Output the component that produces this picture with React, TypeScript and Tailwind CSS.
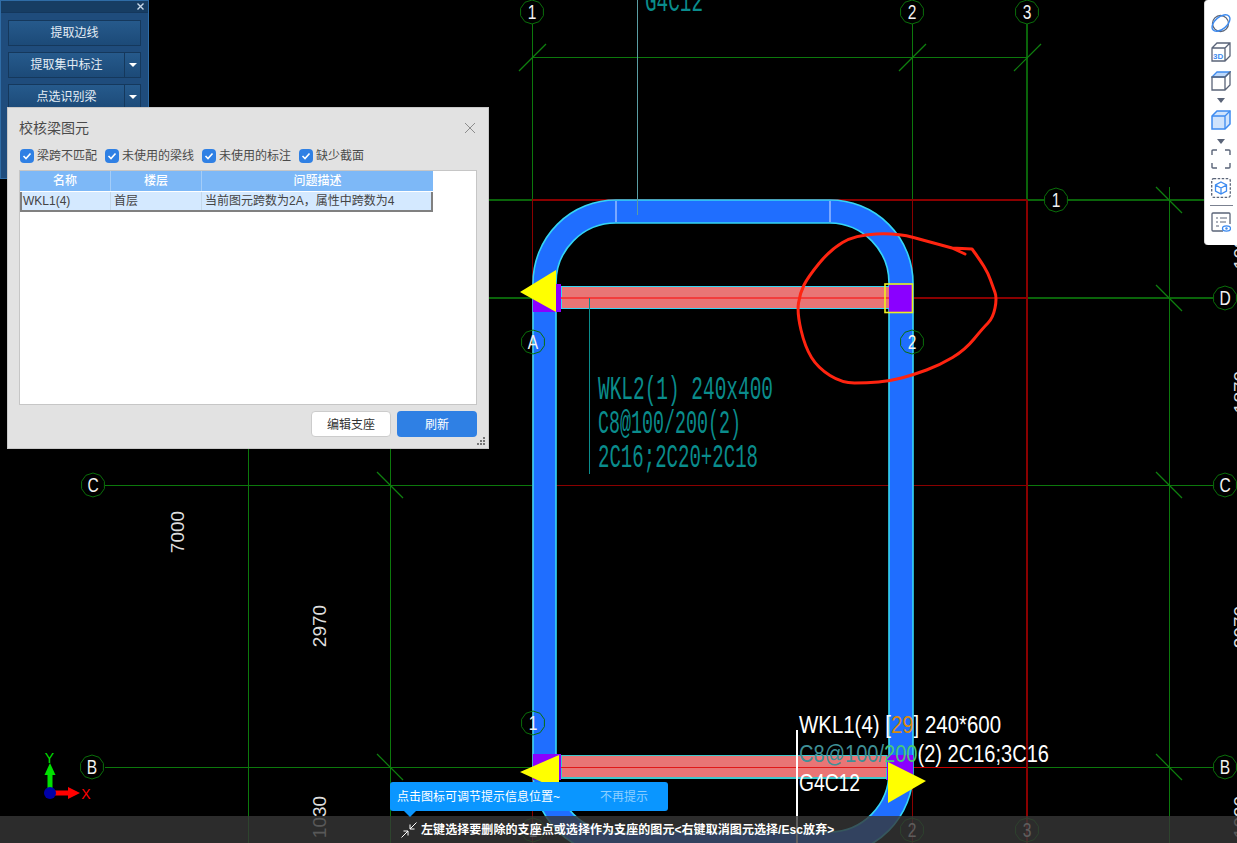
const GREEN = '#0c780c';
const DARK_RED = '#8a0000';
const TEAL = '#0a8c8c';
const BEAM = '#1f6eff';
const CYAN = '#35d6f5';

const SCRIBBLE = [
  [965, 254], [952, 248], [972, 249], [980, 260], [988, 273], [993, 287], [997, 298], [993, 318], [983, 328],
  [965, 350], [940, 365], [913, 375], [890, 381], [867, 383], [842, 383], [818, 368], [805, 347], [797, 313],
  [800, 293], [808, 277], [830, 250], [855, 235], [897, 233], [930, 242], [952, 248],
];

function smoothPath(pts: number[][]) {
  let d = `M${pts[0][0]} ${pts[0][1]} L${pts[1][0]} ${pts[1][1]} L${pts[2][0]} ${pts[2][1]}`;
  for (let i = 3; i < pts.length; i++) {
    const mx = (pts[i - 1][0] + pts[i][0]) / 2;
    const my = (pts[i - 1][1] + pts[i][1]) / 2;
    d += ` Q${pts[i - 1][0]} ${pts[i - 1][1]} ${mx} ${my}`;
  }
  const last = pts[pts.length - 1];
  return `${d} L${last[0]} ${last[1]}`;
}

function gon(cx: number, cy: number, r: number) {
  const pts: string[] = [];
  for (let i = 0; i < 10; i++) {
    const a = (Math.PI * 2 * i) / 10 + Math.PI / 10;
    pts.push(`${(cx + r * Math.cos(a)).toFixed(1)},${(cy + r * Math.sin(a)).toFixed(1)}`);
  }
  return pts.join(' ');
}

function Axis({ x, y, label, fill = 'black' }: { x: number; y: number; label: string; fill?: string }) {
  return (
    <g>
      <polygon points={gon(x, y, 12)} fill={fill} stroke="#0a6e0a" strokeWidth="1" />
      <text transform={`translate(${x},${y + 7}) scale(0.82,1.03)`} fontSize="19" fill="#f2f2f2" textAnchor="middle">{label}</text>
    </g>
  );
}

function Line({ x1, y1, x2, y2, c = GREEN, w = 1 }: { x1: number; y1: number; x2: number; y2: number; c?: string; w?: number }) {
  return <line x1={x1} y1={y1} x2={x2} y2={y2} stroke={c} strokeWidth={w} shapeRendering="crispEdges" />;
}

function Tick({ x1, y1, x2, y2 }: { x1: number; y1: number; x2: number; y2: number }) {
  return <line x1={x1} y1={y1} x2={x2} y2={y2} stroke="#0f800f" strokeWidth="1.2" />;
}

function Dim({ x, y, t }: { x: number; y: number; t: string }) {
  return (
    <text transform={`translate(${x},${y}) rotate(-90)`} fontSize="19" fill="#dddddd" textAnchor="middle">{t}</text>
  );
}

function CadDrawing() {
  const backTicks = [[390, 485], [390, 767], [1169, 200], [1169, 298], [1169, 485], [1169, 767]];
  const slashTicks = [532, 912, 1027];
  return (
    <svg className="absolute inset-0" width="1237" height="843" viewBox="0 0 1237 843">
      {/* axis grid */}
      <Line x1={248} y1={440} x2={248} y2={843} />
      <Line x1={390} y1={440} x2={390} y2={843} />
      <Line x1={1169} y1={187} x2={1169} y2={843} />
      <Line x1={532} y1={24} x2={532} y2={200} />
      <Line x1={912} y1={24} x2={912} y2={200} />
      <Line x1={1027} y1={24} x2={1027} y2={200} w={2} c="#0a640a" />
      <Line x1={532} y1={57} x2={1027} y2={57} />
      <Line x1={489} y1={200} x2={532} y2={200} w={2} c="#0a640a" />
      <Line x1={489} y1={298} x2={532} y2={298} w={2} c="#0a640a" />
      <Line x1={105} y1={485} x2={532} y2={485} />
      <Line x1={105} y1={767} x2={532} y2={767} />
      <Line x1={1027} y1={200} x2={1204} y2={200} w={2} c="#0a640a" />
      <Line x1={1027} y1={298} x2={1213} y2={298} w={2} c="#0a640a" />
      <Line x1={1027} y1={485} x2={1213} y2={485} />
      <Line x1={1027} y1={767} x2={1213} y2={767} />
      <Line x1={532} y1={200} x2={1027} y2={200} c={DARK_RED} w={2} />
      <Line x1={532} y1={298} x2={1027} y2={298} c={DARK_RED} w={2} />
      <Line x1={532} y1={485} x2={1027} y2={485} c={DARK_RED} />
      <Line x1={532} y1={767} x2={1027} y2={767} c="#c80000" />
      <Line x1={532} y1={200} x2={532} y2={843} c={DARK_RED} />
      <Line x1={912} y1={200} x2={912} y2={843} c={DARK_RED} />
      <Line x1={1027} y1={200} x2={1027} y2={843} c={DARK_RED} w={2} />
      {backTicks.map(([x, y]) => (
        <Tick key={`${x}-${y}`} x1={x - 13} y1={y - 13} x2={x + 13} y2={y + 13} />
      ))}
      {slashTicks.map((x) => (
        <Tick key={x} x1={x + 14} y1={44} x2={x - 13} y2={71} />
      ))}

      {/* ring beam */}
      <path
        d="M533 283 A83 83 0 0 1 616 200 H830 A83 83 0 0 1 913 283 V772 A83 83 0 0 1 830 855 H616 A83 83 0 0 1 533 772 Z M556 283 V772 A60 60 0 0 0 616 832 H830 A60 60 0 0 0 889 772 V283 A60 60 0 0 0 830 223 H616 A60 60 0 0 0 556 283 Z"
        fill={BEAM}
        fillRule="evenodd"
        stroke={CYAN}
        strokeWidth="1.6"
      />
      <Line x1={616} y1={201} x2={616} y2={222} c="#7aa8ff" w={2} />
      <Line x1={830} y1={201} x2={830} y2={222} c="#7aa8ff" w={2} />

      {/* upper cross beam */}
      <rect x={533} y={286} width={23} height={26} fill="#8a00ff" />
      <rect x={556} y={284} width={5} height={28} fill="#8a00ff" />
      <rect x={561.5} y={286.5} width={328} height={22} fill="#e97575" stroke={CYAN} strokeWidth="1" shapeRendering="crispEdges" />
      <Line x1={561} y1={298} x2={890} y2={298} c="#f23c3c" w={2} />
      <rect x={889} y={285} width={23} height={27} fill="#8a00ff" />
      <rect x={885} y={284} width={27.5} height={28.5} fill="none" stroke="#eeee20" strokeWidth="1.6" />
      <polygon points="520,292 556,270 556,312" fill="#ffff00" />

      {/* lower cross beam */}
      <rect x={533} y={754} width={23} height={26} fill="#8a00ff" />
      <rect x={556} y={754} width={5} height={26} fill="#8a00ff" />
      <rect x={886} y={755} width={27} height={25} fill="#8a00ff" />
      <rect x={561.5} y={755.5} width={325} height={22.5} fill="#e97575" stroke="#3cc8cc" strokeWidth="1.5" shapeRendering="crispEdges" />
      <Line x1={561} y1={767} x2={887} y2={767} c="#e01818" />
      <polygon points="520,772 559,755 559,790" fill="#ffff00" />
      <polygon points="888,762 926,781 888,803" fill="#ffff00" />

      {/* WKL2 leader and top note */}
      <Line x1={637} y1={0} x2={637} y2={215} c="#5a9da3" />
      <Line x1={589} y1={298} x2={589} y2={474} c={TEAL} />
      <g fill={TEAL} style={{ fontFamily: "'Liberation Mono', monospace" }}>
        <text x={645} y={11} fontSize="32" textLength="58" lengthAdjust="spacingAndGlyphs">G4C12</text>
        <text x={598} y={399} fontSize="34" textLength="175" lengthAdjust="spacingAndGlyphs">WKL2(1) 240x400</text>
        <text x={598} y={433} fontSize="34" textLength="143" lengthAdjust="spacingAndGlyphs">C8@100/200(2)</text>
        <text x={598} y={467} fontSize="34" textLength="160" lengthAdjust="spacingAndGlyphs">2C16;2C20+2C18</text>
      </g>

      {/* hand drawn circle */}
      <path d={smoothPath(SCRIBBLE)} fill="none" stroke="#ff2410" strokeWidth="3" strokeLinejoin="round" strokeLinecap="round" />

      {/* axis bubbles */}
      <Axis x={532} y={12} label="1" />
      <Axis x={912} y={12} label="2" />
      <Axis x={1027} y={12} label="3" />
      <Axis x={1056} y={200} label="1" />
      <Axis x={533} y={342} label="A" fill="none" />
      <Axis x={912} y={342} label="2" fill="none" />
      <Axis x={533} y={723} label="1" fill="none" />
      <Axis x={93} y={485} label="C" />
      <Axis x={92} y={767} label="B" />
      <Axis x={1225} y={298} label="D" />
      <Axis x={1225} y={485} label="C" />
      <Axis x={1225} y={767} label="B" />
      <Axis x={533} y={830} label="1" fill="none" />
      <Axis x={912} y={830} label="2" fill="none" />
      <Axis x={1027} y={830} label="3" fill="none" />

      {/* dimensions */}
      <Dim x={184} y={532} t="7000" />
      <Dim x={326} y={626} t="2970" />
      <Dim x={326} y={817} t="1030" />
      <Dim x={1247} y={248} t="1030" />
      <Dim x={1247} y={392} t="1870" />
      <Dim x={1247} y={627} t="2970" />
      <Dim x={1247} y={817} t="1030" />

      {/* beam label */}
      <Line x1={797} y1={730} x2={797} y2={843} c="#ffffff" w={2} />
      <g fontSize="23" fill="#ffffff">
        <text x={799} y={733} textLength="202" lengthAdjust="spacingAndGlyphs">
          WKL1(4) [<tspan fill="#d98a12">29</tspan>] 240*600
        </text>
        <text x={799} y={762} textLength="250" lengthAdjust="spacingAndGlyphs">
          <tspan fill="#3f9097">C8@100/</tspan><tspan fill="#48c878">200</tspan>(2) 2C16;3C16
        </text>
        <text x={799} y={791} textLength="61" lengthAdjust="spacingAndGlyphs">G4C12</text>
      </g>

      {/* UCS icon */}
      <rect x={47.5} y={772} width={5} height={20} fill="#00e000" />
      <polygon points="50,763 55.5,775 44.5,775" fill="#00e000" />
      <rect x={55} y={790.5} width={14} height={5} fill="#ff0000" />
      <polygon points="68,787 80,793 68,799" fill="#ff0000" />
      <circle cx={50} cy={793} r={6} fill="#0000a8" />
      <text x={49.5} y={763} fontSize="14" fill="#00e000" textAnchor="middle">Y</text>
      <text x={86} y={799} fontSize="14" fill="#ff0000" textAnchor="middle">X</text>
    </svg>
  );
}

function PanelButton({ label, split }: { label: string; split?: boolean }) {
  return (
    <div className="flex h-[26px] border border-[#15385c] bg-gradient-to-b from-[#265a8c] to-[#1c4a78] text-xs text-[#e4edf5]">
      <div className="flex flex-1 items-center justify-center">{label}</div>
      {split && (
        <div className="flex w-4 items-center justify-center border-l border-[#15385c]">
          <div className="h-0 w-0 border-x-[4px] border-t-[4px] border-x-transparent border-t-white" />
        </div>
      )}
    </div>
  );
}

function LeftPanel() {
  return (
    <div className="absolute left-0 top-0 flex h-[179px] w-[149px] flex-col border border-[#2f6ca6] bg-[#1f4c7c]">
      <div className="flex h-3 items-center justify-end border-b border-[#14375c] bg-[#173d63] pr-1">
        <svg width="7" height="7" viewBox="0 0 7 7">
          <path d="M0.5 0.5 L6.5 6.5 M6.5 0.5 L0.5 6.5" stroke="#c9d9ea" strokeWidth="1.4" />
        </svg>
      </div>
      <div className="flex flex-col gap-[6px] px-[7px] pt-[7px]">
        <PanelButton label="提取边线" />
        <PanelButton label="提取集中标注" split />
        <PanelButton label="点选识别梁" split />
      </div>
    </div>
  );
}

function Check({ label }: { label: string }) {
  return (
    <label className="flex items-center gap-[3px] text-xs text-[#4a4a4a]">
      <span className="flex h-[14px] w-[14px] items-center justify-center rounded-sm bg-[#2f80e4]">
        <svg width="10" height="10" viewBox="0 0 10 10" fill="none">
          <path d="M1.5 5 L4 7.5 L8.5 2.5" stroke="#ffffff" strokeWidth="1.6" />
        </svg>
      </span>
      {label}
    </label>
  );
}

function CheckDialog() {
  return (
    <div className="absolute left-[7px] top-[107px] flex h-[342px] w-[482px] flex-col border border-[#c8c8c8] bg-[#e2e2e2]">
      <div className="flex h-[39px] items-center justify-between pl-[11px] pr-[12px]">
        <span className="text-sm text-[#4a4a4a]">校核梁图元</span>
        <svg width="12" height="12" viewBox="0 0 12 12">
          <path d="M1 1 L11 11 M11 1 L1 11" stroke="#8c8c8c" strokeWidth="1" />
        </svg>
      </div>
      <div className="flex h-[18px] items-center pl-3">
        <div className="w-[85px]"><Check label="梁跨不匹配" /></div>
        <div className="w-[97px]"><Check label="未使用的梁线" /></div>
        <div className="w-[97px]"><Check label="未使用的标注" /></div>
        <Check label="缺少截面" />
      </div>
      <div className="ml-[11px] mt-[5px] h-[235px] w-[458px] border border-[#c6c6c6] bg-white">
        <div className="w-[413px] text-xs">
          <div className="grid h-[20px] grid-cols-[91px_91px_231px] items-center bg-[#7db8f7] text-center font-medium text-white">
            <div className="border-r border-[#a4cdf8] leading-[20px]">名称</div>
            <div className="border-r border-[#a4cdf8] leading-[20px]">楼层</div>
            <div className="leading-[20px]">问题描述</div>
          </div>
          <div className="mt-px grid h-[20px] grid-cols-[89px_91px_231px] border-x-2 border-b-2 border-x-[#808080] border-b-[#808080] bg-[#d4e9ff] text-[#444444]">
            <div className="border-r border-[#c4d8ea] pl-px leading-[18px]">WKL1(4)</div>
            <div className="border-r border-[#c4d8ea] pl-[3px] leading-[18px]">首层</div>
            <div className="pl-[3px] leading-[18px]">当前图元跨数为2A，属性中跨数为4</div>
          </div>
        </div>
      </div>
      <div className="ml-[303px] mt-[6px] flex gap-[6px] text-xs">
        <div className="flex h-[26px] w-[80px] items-center justify-center rounded border border-[#cccccc] bg-white pt-px text-[#333333]">编辑支座</div>
        <div className="flex h-[26px] w-[80px] items-center justify-center rounded bg-[#2f80e4] pt-px text-white">刷新</div>
      </div>
      <svg className="absolute bottom-[3px] right-[3px]" width="8" height="8" viewBox="0 0 8 8" fill="#777777">
        <rect x="6" y="0" width="2" height="2" />
        <rect x="3" y="3" width="2" height="2" />
        <rect x="6" y="3" width="2" height="2" />
        <rect x="0" y="6" width="2" height="2" />
        <rect x="3" y="6" width="2" height="2" />
        <rect x="6" y="6" width="2" height="2" />
      </svg>
    </div>
  );
}

const INK = '#5a6478';
const BLUE = '#3d8bf0';

function Box({ className, children }: { className?: string; children: React.ReactNode }) {
  return (
    <svg className={className} width="20" height="20" viewBox="0 0 20 20" fill="none" strokeWidth="1.3">
      {children}
    </svg>
  );
}

function Caret({ className }: { className: string }) {
  return <div className={`h-0 w-0 border-x-[4px] border-t-[5px] border-x-transparent border-t-[#5a6478] ${className}`} />;
}

function ViewToolbar() {
  return (
    <div className="absolute right-0 top-0 flex h-[245px] w-[33px] flex-col items-center rounded-l-sm border-l border-[#d8d8d8] bg-white pt-[13px]">
      <Box>
        <circle cx="9.5" cy="10.5" r="8" stroke={INK} />
        <ellipse cx="10" cy="10" rx="10.5" ry="6" transform="rotate(-40 10 10)" stroke={BLUE} strokeWidth="1.4" />
      </Box>
      <Box className="mt-[9px]">
        <path d="M1 6 L6 1 H19 V14 L14 19 H1 Z M1 6 H14 V19 M14 6 L19 1" stroke={INK} />
        <text x="2" y="16.5" fontSize="8" fontWeight="700" fill={BLUE} style={{ fontFamily: "'Liberation Sans', sans-serif" }}>3D</text>
      </Box>
      <Box className="mt-[9px]">
        <path d="M1 6 L6 1 H19 L14 6 Z" fill="#bcd8fb" stroke={BLUE} />
        <path d="M14 6 L19 1 V14 L14 19 H1 V6 H14 V19" stroke={INK} />
      </Box>
      <Caret className="mt-[7px]" />
      <Box className="mt-[7px]">
        <path d="M1 6 L6 1 H19 V14 L14 19 H1 Z" fill="#cfe3fc" stroke={BLUE} strokeWidth="1.5" />
        <path d="M1 6 H14 V19 M14 6 L19 1" stroke={BLUE} />
      </Box>
      <Caret className="mt-[9px]" />
      <Box className="mt-[5px]">
        <path d="M1 6 V2 Q1 1 2 1 H6 M14 1 H18 Q19 1 19 2 V6 M19 14 V18 Q19 19 18 19 H14 M6 19 H2 Q1 19 1 18 V14" stroke={INK} strokeWidth="1.4" />
      </Box>
      <Box className="mt-[9px]">
        <rect x="0.7" y="0.7" width="18.6" height="18.6" rx="2" stroke={INK} strokeDasharray="2.5 1.5" />
        <path d="M10 4 L15.5 7 V13 L10 16 L4.5 13 V7 Z M4.5 7 L10 10 L15.5 7 M10 10 V16" stroke={BLUE} />
      </Box>
      <div className="mt-[7px] h-px w-[23px] shrink-0 bg-[#7b8190]" />
      <Box className="mt-[6px]">
        <path d="M12 19 H2 Q1 19 1 18 V2 Q1 1 2 1 H18 Q19 1 19 2 V12" stroke={INK} />
        <path d="M5 6 H7 M9 6 H16 M5 10 H7 M9 10 H15 M5 14 H8" stroke={INK} strokeWidth="1" />
        <ellipse cx="15.5" cy="16.5" rx="4" ry="2.6" stroke={BLUE} />
        <circle cx="15.5" cy="16.5" r="1.2" fill={BLUE} />
      </Box>
    </div>
  );
}

function StatusBar() {
  return (
    <div className="absolute inset-x-0 bottom-0 flex h-[27px] items-center bg-[#373737]/80 pl-[401px] text-xs font-bold text-white">
      <svg width="16" height="16" viewBox="0 0 16 16" fill="none" stroke="#ffffff" strokeWidth="1">
        <path d="M0.5 15.5 L7 9 M2.5 9 H7 V13.5 M15.5 0.5 L9 7 M13.5 7 H9 V2.5" />
      </svg>
      <span className="ml-1 tracking-[0.07px]">左键选择要删除的支座点或选择作为支座的图元&lt;右键取消图元选择/Esc放弃&gt;</span>
    </div>
  );
}

function HintBubble() {
  return (
    <div className="absolute left-[390px] top-[782px] flex h-[29px] w-[278px] items-center rounded-[3px] bg-[#0a96ff] pl-[7px] text-xs text-white">
      <span className="w-[203px]">点击图标可调节提示信息位置~</span>
      <span className="text-[#8ed0ff]">不再提示</span>
      <div className="absolute left-[14px] top-full h-0 w-0 border-x-[6px] border-t-[6px] border-x-transparent border-t-[#0a96ff]" />
    </div>
  );
}

export default function App() {
  return (
    <div className="relative h-[843px] w-[1237px] overflow-hidden bg-black [font-family:'Liberation_Sans','Noto_Sans_CJK_SC',sans-serif]">
      <CadDrawing />
      <LeftPanel />
      <CheckDialog />
      <ViewToolbar />
      <StatusBar />
      <HintBubble />
    </div>
  );
}
